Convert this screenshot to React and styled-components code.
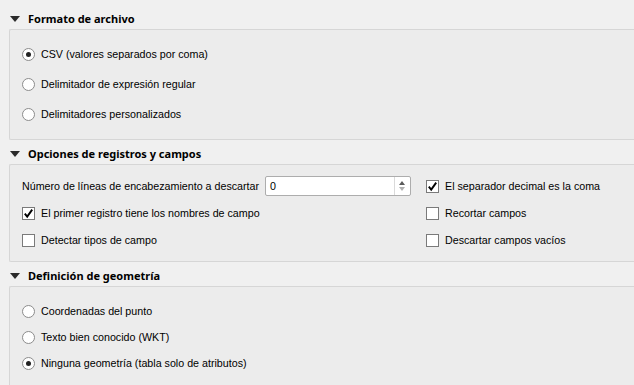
import React from 'react'
import styled, { createGlobalStyle } from 'styled-components'

const GlobalStyle = createGlobalStyle`
  html, body {
    margin: 0;
    padding: 0;
    background: #f0f0f0;
    overflow: hidden;
  }
  body {
    font-family: 'Liberation Sans', Arial, sans-serif;
    font-size: 10.7px;
    color: #000;
  }
`

const Page = styled.div`
  width: 634px;
  height: 385px;
  padding: 8px 0 0 9px;
  box-sizing: border-box;
  overflow: hidden;
`

const Section = styled.section`
  margin-bottom: 3px;
`

const Header = styled.div`
  display: flex;
  align-items: center;
  height: 21px;
  padding-left: 1px;
  gap: 8px;
  font-family: 'Noto Sans', 'Liberation Sans', sans-serif;
  font-weight: bold;
  font-size: 11px;
`

const Triangle = styled.span`
  width: 0;
  height: 0;
  border-left: 5.5px solid transparent;
  border-right: 5.5px solid transparent;
  border-top: 6px solid #2b2b2b;
  margin-top: 1px;
`

const Panel = styled.div`
  background: #ececec;
  border: 1px solid #d6d6d6;
  border-right: none;
  border-radius: 2px 0 0 2px;
  height: ${p => p.$h}px;
  box-sizing: border-box;
  padding: ${p => p.$pad};
  margin-right: -4px;
`

const OptionList = styled.div`
  display: flex;
  flex-direction: column;
  gap: ${p => p.$gap}px;
`

const Option = styled.label`
  display: flex;
  align-items: center;
  height: 20px;
  gap: 6px;
  white-space: nowrap;
`

const Radio = styled.span`
  position: relative;
  width: 13px;
  height: 13px;
  box-sizing: border-box;
  border-radius: 50%;
  border: 1px solid #8c8c8c;
  background: #fff;
  flex: none;

  &::after {
    content: '';
    display: ${p => (p.$on ? 'block' : 'none')};
    position: absolute;
    left: 3px;
    top: 3px;
    width: 5px;
    height: 5px;
    border-radius: 50%;
    background: #222;
  }
`

const Box = styled.span`
  display: flex;
  align-items: center;
  justify-content: center;
  width: 13px;
  height: 13px;
  box-sizing: border-box;
  border: 1px solid #7a7a7a;
  background: #fff;
  flex: none;
`

const Grid = styled.div`
  display: grid;
  grid-template-columns: 243px 146px 1fr;
  grid-template-rows: 20px 20px 20px;
  row-gap: 7px;
  align-items: center;
`

const FieldLabel = styled.span`
  white-space: nowrap;
`

const Spin = styled.div`
  display: flex;
  height: 20px;
  box-sizing: border-box;
  border: 1px solid #adadad;
  background: #fff;
  border-radius: 2px;
`

const SpinText = styled.span`
  flex: 1;
  padding-left: 4px;
  line-height: 18px;
`

const SpinArrows = styled.div`
  width: 13px;
  border-left: 1px solid #dadada;
  display: flex;
  flex-direction: column;
  align-items: center;
  justify-content: center;
  gap: 2px;
  margin-right: 2px;
`

const Arrow = styled.span`
  width: 0;
  height: 0;
  border-left: 3px solid transparent;
  border-right: 3px solid transparent;
  ${p => (p.$up ? 'border-bottom: 4px solid #5a5a5a;' : 'border-top: 4px solid #b0b0b0;')}
`

const Right = styled.div`
  padding-left: 15px;
`

const Span2 = styled.div`
  grid-column: 1 / span 2;
`

function Check({ on }) {
  return (
    <Box>
      {on && (
        <svg width="11" height="11" viewBox="0 0 11 11">
          <path d="M1.8 5.6 L4.2 8.6 L9.2 1.6" fill="none" stroke="#000" strokeWidth="1.9" />
        </svg>
      )}
    </Box>
  )
}

function SectionHead({ title }) {
  return (
    <Header>
      <Triangle />
      {title}
    </Header>
  )
}

export default function App() {
  return (
    <Page>
      <GlobalStyle />
      <Section>
        <SectionHead title="Formato de archivo" />
        <Panel $h={111} $pad="14px 0 0 12px">
          <OptionList $gap={10}>
            <Option><Radio $on />CSV (valores separados por coma)</Option>
            <Option><Radio />Delimitador de expresión regular</Option>
            <Option><Radio />Delimitadores personalizados</Option>
          </OptionList>
        </Panel>
      </Section>
      <Section>
        <SectionHead title="Opciones de registros y campos" />
        <Panel $h={98} $pad="11px 0 0 12px">
          <Grid>
            <FieldLabel>Número de líneas de encabezamiento a descartar</FieldLabel>
            <Spin>
              <SpinText>0</SpinText>
              <SpinArrows>
                <Arrow $up />
                <Arrow />
              </SpinArrows>
            </Spin>
            <Right>
              <Option><Check on />El separador decimal es la coma</Option>
            </Right>
            <Span2>
              <Option><Check on />El primer registro tiene los nombres de campo</Option>
            </Span2>
            <Right>
              <Option><Check />Recortar campos</Option>
            </Right>
            <Span2>
              <Option><Check />Detectar tipos de campo</Option>
            </Span2>
            <Right>
              <Option><Check />Descartar campos vacíos</Option>
            </Right>
          </Grid>
        </Panel>
      </Section>
      <Section>
        <SectionHead title="Definición de geometría" />
        <Panel $h={120} $pad="14px 0 0 12px">
          <OptionList $gap={6}>
            <Option><Radio />Coordenadas del punto</Option>
            <Option><Radio />Texto bien conocido (WKT)</Option>
            <Option><Radio $on />Ninguna geometría (tabla solo de atributos)</Option>
          </OptionList>
        </Panel>
      </Section>
    </Page>
  )
}
